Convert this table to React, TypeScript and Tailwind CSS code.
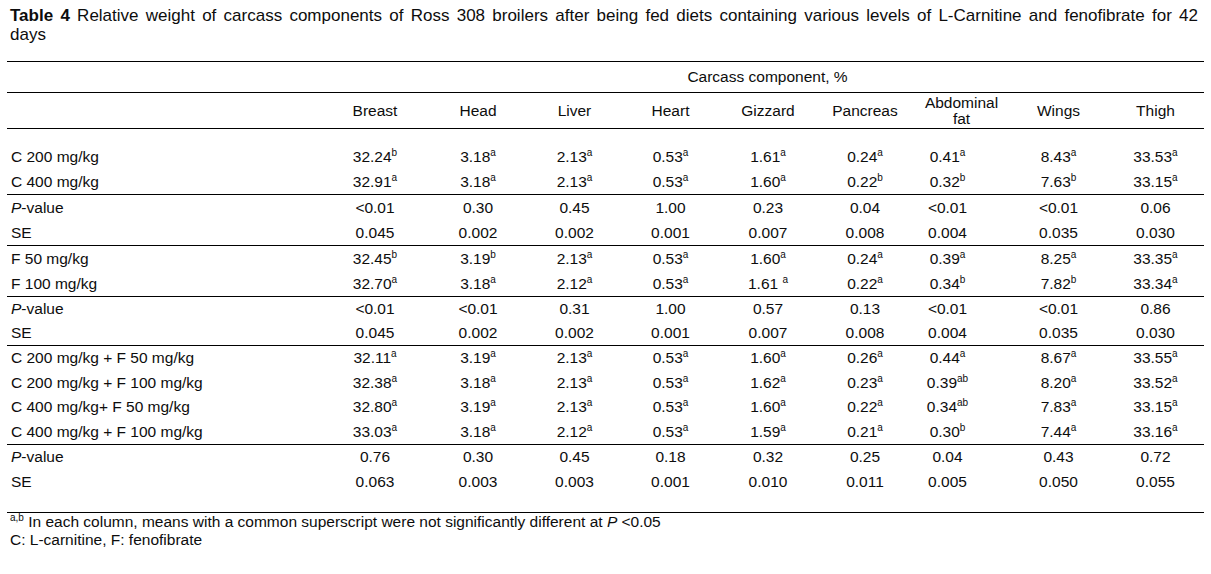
import React from "react";

const cols = ["Breast", "Head", "Liver", "Heart", "Gizzard", "Pancreas", "Abdominal fat", "Wings", "Thigh"];
const dataPad = ["pr-[10px]", "", "", "", "", "", "pr-[28px]", "", ""];
const gridCls =
  "grid grid-cols-[324px_98px_98px_95px_97px_98px_96px_97px_97px_97px] items-center";

type Row = { label: React.ReactNode; vals: string[] };

const pLabel = (
  <>
    <i>P</i>-value
  </>
);

const groups: { rows: Row[]; rowH: string; extra: string }[] = [
  {
    rowH: "h-[25px]",
    extra: "pt-[15px]",
    rows: [
      { label: "C 200 mg/kg", vals: ["32.24^b", "3.18^a", "2.13^a", "0.53^a", "1.61^a", "0.24^a", "0.41^a", "8.43^a", "33.53^a"] },
      { label: "C 400 mg/kg", vals: ["32.91^a", "3.18^a", "2.13^a", "0.53^a", "1.60^a", "0.22^b", "0.32^b", "7.63^b", "33.15^a"] },
    ],
  },
  {
    rowH: "h-[25px]",
    extra: "",
    rows: [
      { label: pLabel, vals: ["<0.01", "0.30", "0.45", "1.00", "0.23", "0.04", "<0.01", "<0.01", "0.06"] },
      { label: "SE", vals: ["0.045", "0.002", "0.002", "0.001", "0.007", "0.008", "0.004", "0.035", "0.030"] },
    ],
  },
  {
    rowH: "h-[25px]",
    extra: "",
    rows: [
      { label: "F 50 mg/kg", vals: ["32.45^b", "3.19^b", "2.13^a", "0.53^a", "1.60^a", "0.24^a", "0.39^a", "8.25^a", "33.35^a"] },
      { label: "F 100 mg/kg", vals: ["32.70^a", "3.18^a", "2.12^a", "0.53^a", "1.61 ^a", "0.22^a", "0.34^b", "7.82^b", "33.34^a"] },
    ],
  },
  {
    rowH: "h-[24px]",
    extra: "",
    rows: [
      { label: pLabel, vals: ["<0.01", "<0.01", "0.31", "1.00", "0.57", "0.13", "<0.01", "<0.01", "0.86"] },
      { label: "SE", vals: ["0.045", "0.002", "0.002", "0.001", "0.007", "0.008", "0.004", "0.035", "0.030"] },
    ],
  },
  {
    rowH: "h-[24.5px]",
    extra: "",
    rows: [
      { label: "C 200 mg/kg + F 50 mg/kg", vals: ["32.11^a", "3.19^a", "2.13^a", "0.53^a", "1.60^a", "0.26^a", "0.44^a", "8.67^a", "33.55^a"] },
      { label: "C 200 mg/kg + F 100 mg/kg", vals: ["32.38^a", "3.18^a", "2.13^a", "0.53^a", "1.62^a", "0.23^a", "0.39^ab", "8.20^a", "33.52^a"] },
      { label: "C 400 mg/kg+ F 50 mg/kg", vals: ["32.80^a", "3.19^a", "2.13^a", "0.53^a", "1.60^a", "0.22^a", "0.34^ab", "7.83^a", "33.15^a"] },
      { label: "C 400 mg/kg + F 100 mg/kg", vals: ["33.03^a", "3.18^a", "2.12^a", "0.53^a", "1.59^a", "0.21^a", "0.30^b", "7.44^a", "33.16^a"] },
    ],
  },
  {
    rowH: "h-[24.5px]",
    extra: "pb-[18px]",
    rows: [
      { label: pLabel, vals: ["0.76", "0.30", "0.45", "0.18", "0.32", "0.25", "0.04", "0.43", "0.72"] },
      { label: "SE", vals: ["0.063", "0.003", "0.003", "0.001", "0.010", "0.011", "0.005", "0.050", "0.055"] },
    ],
  },
];

function Val({ v }: { v: string }) {
  const [main, sup] = v.split("^");
  return (
    <span className="whitespace-pre">
      {main}
      {sup && <sup className="text-[10px] -top-[6px]">{sup}</sup>}
    </span>
  );
}

export default function App() {
  return (
    <div className="w-[1211px] h-[574px] bg-white font-['Liberation_Sans',Arial,sans-serif] text-[#0d0d0d] overflow-hidden">
      <div className="ml-[10px] w-[1188px] pt-[6px] text-[17px] leading-[19px]">
        <div className="text-justify [text-align-last:justify]">
          <b>Table 4</b> Relative weight of carcass components of Ross 308 broilers after being fed diets containing
          various levels of L-Carnitine and fenofibrate for 42
        </div>
        <div>days</div>
      </div>

      <div className="ml-[7px] mt-[17px] w-[1197px] text-[15.5px] leading-[18px] border-t border-black">
        <div className={`${gridCls} h-[31px] border-b border-black`}>
          <div />
          <div className="col-span-9 text-center">Carcass component, %</div>
        </div>
        <div className={`${gridCls} h-[36px] border-b border-black`}>
          <div />
          {cols.map((c, i) => (
            <div key={c} className={`text-center ${i === 0 ? "pr-[10px]" : ""} ${c === "Abdominal fat" ? "leading-[16px]" : ""}`}>
              {c === "Abdominal fat" ? (
                <>
                  Abdominal
                  <br />
                  fat
                </>
              ) : (
                c
              )}
            </div>
          ))}
        </div>
        {groups.map((g, gi) => (
          <div key={gi} className={`border-b border-black ${g.extra}`}>
            {g.rows.map((r, ri) => (
              <div key={ri} className={`${gridCls} ${g.rowH}`}>
                <div className="pl-[4px]">{r.label}</div>
                {r.vals.map((v, vi) => (
                  <div key={vi} className={`text-center ${dataPad[vi]}`}>
                    <Val v={v} />
                  </div>
                ))}
              </div>
            ))}
          </div>
        ))}
        <div className="pl-[3px] text-[15.5px] leading-[18px]">
          <div>
            <sup className="text-[10px] -top-[6px]">a,b</sup> In each column, means with a common superscript were not
            significantly different at <i>P</i> &lt;0.05
          </div>
          <div>C: L-carnitine, F: fenofibrate</div>
        </div>
      </div>
    </div>
  );
}
